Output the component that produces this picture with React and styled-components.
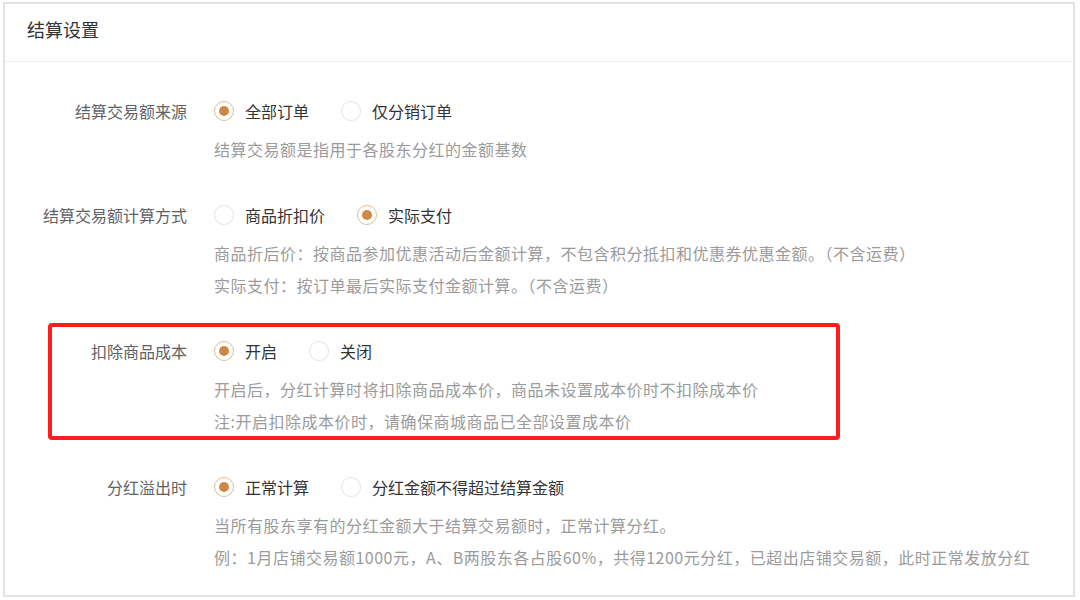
import React, { useState } from "react";
import styled, { createGlobalStyle } from "styled-components";

const GlobalStyle = createGlobalStyle`
  html, body {
    margin: 0;
    padding: 0;
    background: #ffffff;
    font-family: "Noto Sans CJK SC", "Noto Sans", sans-serif;
  }
`

const Card = styled.div`
  margin: 2px 5px 0 3px;
  height: 595px;
  box-sizing: border-box;
  border: 2px solid #e2e2e2;
  background: #ffffff;
`
const Header = styled.div`
  height: 58px;
  box-sizing: border-box;
  padding: 12px 0 0 22px;
  font-size: 18px;
  line-height: 26px;
  color: #333333;
  border-bottom: 1px solid #eeeeee;
`
const Body = styled.div`
  padding-top: 35px;
  display: flex;
  flex-direction: column;
  gap: 36px;
`
const Row = styled.div`
  position: relative;
  display: grid;
  grid-template-columns: 182px 1fr;
  column-gap: 27px;
`
const Label = styled.div`
  text-align: right;
  font-size: 16px;
  line-height: 28px;
  color: #626262;
`
const Content = styled.div`
  display: flex;
  flex-direction: column;
`
const Options = styled.div`
  display: flex;
  align-items: center;
  height: 28px;
  gap: 32px;
`
const Option = styled.label`
  display: flex;
  align-items: center;
  gap: 11px;
  font-size: 16px;
  color: #333333;
  cursor: pointer;
`
const RadioCircle = styled.span`
  width: 20px;
  height: 20px;
  box-sizing: border-box;
  border-radius: 50%;
  border: 1px solid ${p => (p.$checked ? "#e3bd93" : "#e2e2e2")};
  display: flex;
  align-items: center;
  justify-content: center;
  &::after {
    content: "";
    width: 10px;
    height: 10px;
    border-radius: 50%;
    background: ${p => (p.$checked ? "#cc8a45" : "transparent")};
  }
`
const Help = styled.div`
  margin-top: ${p => (p.$first ? "8px" : "0")};
  font-size: 16px;
  line-height: 32px;
  color: #9b9b9b;
  letter-spacing: 0.5px;
  white-space: nowrap;
`
const Highlight = styled.div`
  position: absolute;
  left: 43px;
  top: -14px;
  width: 792px;
  height: 117px;
  box-sizing: border-box;
  border: 4px solid #ff1c1c;
  border-radius: 4px;
  pointer-events: none;
`

const settings = [
  {
    key: "source",
    label: "结算交易额来源",
    options: ["全部订单", "仅分销订单"],
    value: 0,
    help: ["结算交易额是指用于各股东分红的金额基数"],
  },
  {
    key: "calc",
    label: "结算交易额计算方式",
    options: ["商品折扣价", "实际支付"],
    value: 1,
    help: [
      "商品折后价：按商品参加优惠活动后金额计算，不包含积分抵扣和优惠券优惠金额。（不含运费）",
      "实际支付：按订单最后实际支付金额计算。（不含运费）",
    ],
  },
  {
    key: "cost",
    label: "扣除商品成本",
    options: ["开启", "关闭"],
    value: 0,
    highlight: true,
    help: [
      "开启后，分红计算时将扣除商品成本价，商品未设置成本价时不扣除成本价",
      "注:开启扣除成本价时，请确保商城商品已全部设置成本价",
    ],
  },
  {
    key: "overflow",
    label: "分红溢出时",
    options: ["正常计算", "分红金额不得超过结算金额"],
    value: 0,
    help: [
      "当所有股东享有的分红金额大于结算交易额时，正常计算分红。",
      "例：1月店铺交易额1000元，A、B两股东各占股60%，共得1200元分红，已超出店铺交易额，此时正常发放分红",
    ],
  },
]

export default function App() {
  const [values, setValues] = useState(
    Object.fromEntries(settings.map(s => [s.key, s.value]))
  )

  return (
    <>
      <GlobalStyle />
      <Card>
        <Header>结算设置</Header>
        <Body>
          {settings.map(s => (
            <Row key={s.key}>
              <Label>{s.label}</Label>
              <Content>
                <Options>
                  {s.options.map((opt, i) => (
                    <Option key={opt} onClick={() => setValues({ ...values, [s.key]: i })}>
                      <RadioCircle $checked={values[s.key] === i} />
                      {opt}
                    </Option>
                  ))}
                </Options>
                {s.help.map((line, i) => (
                  <Help key={i} $first={i === 0}>{line}</Help>
                ))}
              </Content>
              {s.highlight && <Highlight />}
            </Row>
          ))}
        </Body>
      </Card>
    </>
  );
}
